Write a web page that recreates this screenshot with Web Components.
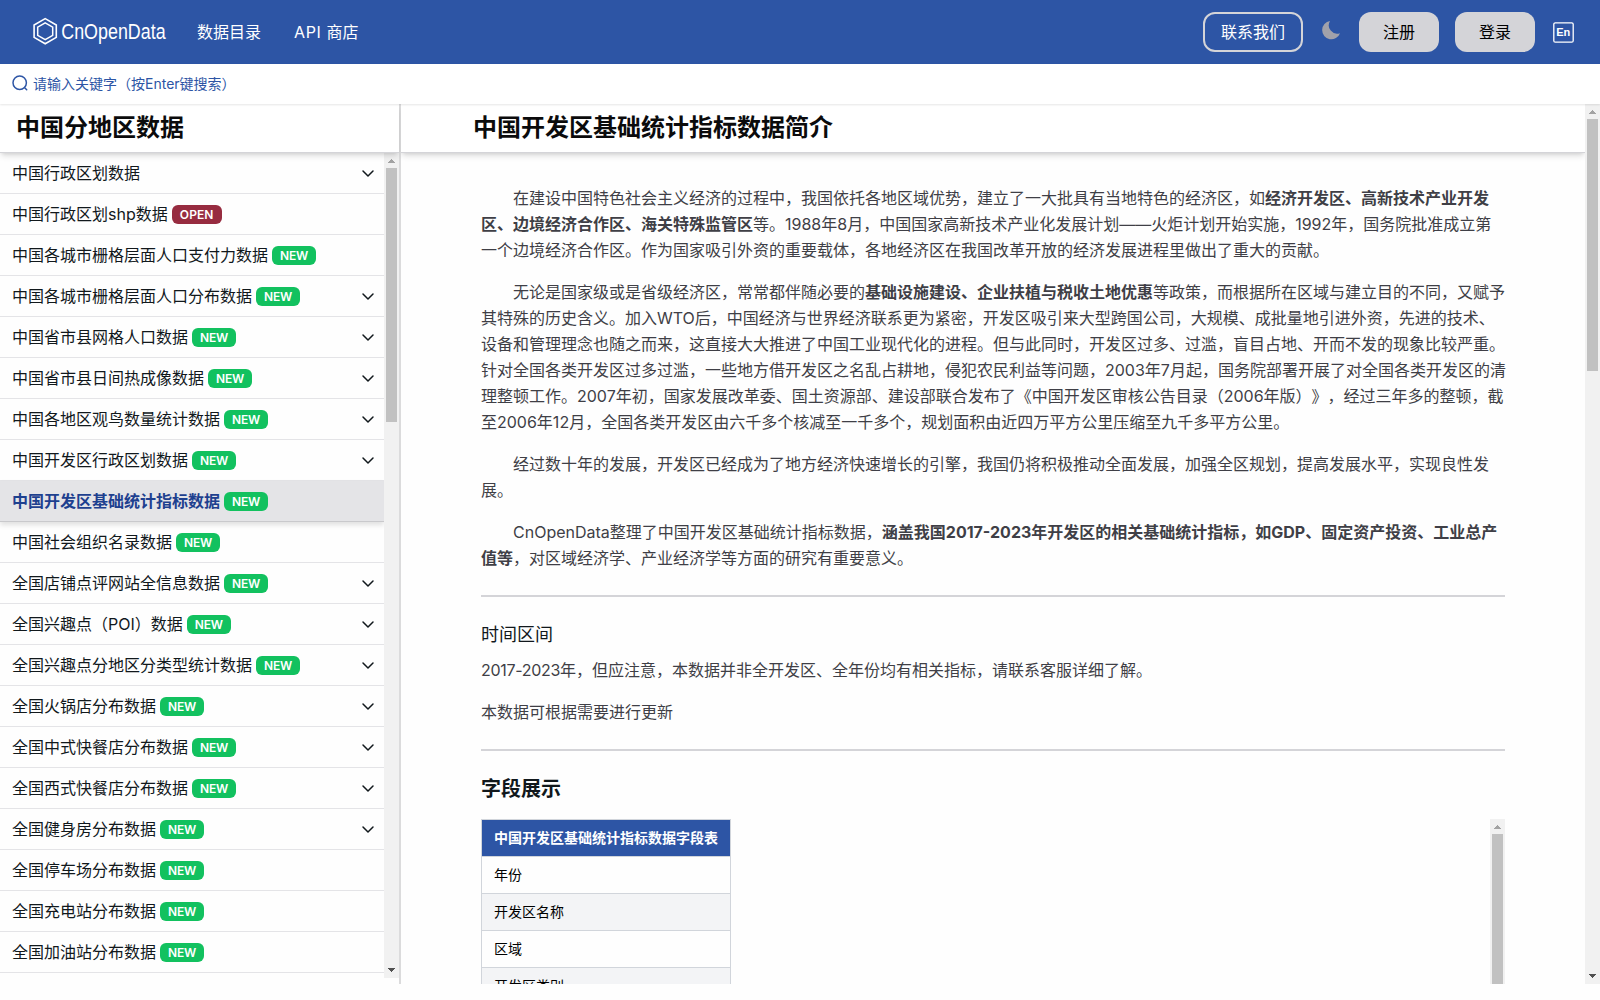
<!DOCTYPE html>
<html lang="zh-CN">
<head>
<meta charset="utf-8">
<title>中国开发区基础统计指标数据 - CnOpenData</title>
<style>
    body {
        margin: 0;
        height: 1000px;
        overflow: hidden;
        background: #fefefe;
        color: #11181c;
        font: 16px/24px Inter, "Noto Sans CJK SC", sans-serif;
        text-spacing-trim: space-all;
    }
</style>
</head>
<body>
<data-page></data-page>

<script>
class SiteHeader extends HTMLElement {
    constructor() {
        super();
        this.attachShadow({ mode: 'open' });
        this.shadowRoot.innerHTML = `
            <style>
                :host {
                    display: flex;
                    align-items: center;
                    justify-content: space-between;
                    box-sizing: border-box;
                    height: 64px;
                    padding: 0 26px 0 32px;
                    background: #2d55a5;
                    color: #fff;
                }
                nav, .actions { display: flex; align-items: center; }
                nav .link { margin-left: 27px; }
                nav .link + .link { margin-left: 33px; }
                .latin { letter-spacing: .6px; }
                svg { display: block; }
                button {
                    box-sizing: border-box;
                    height: 40px;
                    padding: 0;
                    border: 0;
                    border-radius: 12px;
                    background: #d4d4d8;
                    color: #000;
                    font: inherit;
                    width: 80px;
                }
                .contact {
                    width: 100px;
                    border: 2px solid #d4d4d8;
                    background: none;
                    color: #fff;
                }
                .moon { margin: 0 18px 4px; }
                .login { margin: 0 18px 0 16px; }
            </style>
            <nav>
                <svg width="138" height="36" viewBox="0 0 138 36" fill="none">
                    <path d="M13.2 4.6 24.3 11v12.400L13.2 29.800 2.1 23.400V11z" stroke="#fff" stroke-width="1.6"/>
                    <path d="M13.200 8.800 20.700 13.100v8.200L13.200 25.600 5.700 21.300V13.100z" stroke="#fff" stroke-width="1.5"/>
                    <text transform="scale(.795 1)" x="36.800" y="25.300" fill="#fff" font-family="Liberation Sans, Arial, sans-serif" font-size="22.500">CnOpenData</text>
                </svg>
                <span class="link">数据目录</span>
                <span class="link"><span class="latin">API </span>商店</span>
            </nav>
            <div class="actions">
                <button class="contact">联系我们</button>
                <svg class="moon" width="20" height="20" viewBox="0 0 20 20"><path d="M9 1A9.200 9.200 0 1 0 19 13.200 8.400 8.400 0 0 1 9 1z" fill="#a1a1aa"/></svg>
                <button>注册</button>
                <button class="login">登录</button>
                <svg width="21" height="22" viewBox="0 0 21 22">
                    <rect x=".8" y="1.800" width="19.400" height="19.400" rx="1.500" fill="none" stroke="#fff" stroke-width="1.300"/>
                    <text x="10.300" y="15.200" text-anchor="middle" fill="#fff" font-family="Liberation Sans, Arial, sans-serif" font-size="11" font-weight="700">En</text>
                </svg>
            </div>
        `;
    }
}
customElements.define('site-header', SiteHeader);

class SearchBar extends HTMLElement {
    constructor() {
        super();
        this.attachShadow({ mode: 'open' });
        this.shadowRoot.innerHTML = `
            <style>
                :host {
                    display: flex;
                    align-items: center;
                    box-sizing: border-box;
                    height: 40px;
                    padding: 0 12px;
                    gap: 4px;
                    background: #fff;
                    color: #2d55a5;
                    font-size: 14px;
                    line-height: 20px;
                    box-shadow: 0 1px 2px rgba(0, 0, 0, .1);
                    position: relative;
                    z-index: 3;
                }
                svg { margin-bottom: 1px; }
            </style>
            <svg width="17" height="17" viewBox="0 0 17 17" fill="none" stroke="#2d55a5" stroke-width="1.500" stroke-linecap="round">
                <circle cx="7.700" cy="7.700" r="6.700"/><path d="m12.700 12.700 2 2"/>
            </svg>
            <span>请输入关键字（按Enter键搜索）</span>
        `;
    }
}
customElements.define('search-bar', SearchBar);

// Fixed scrollbar: thumb height comes from the "thumb" attribute
class ScrollTrack extends HTMLElement {
    constructor() {
        super();
        this.attachShadow({ mode: 'open' });
    }

    connectedCallback() {
        this.shadowRoot.innerHTML = `
            <style>
                :host {
                    display: flex;
                    flex-direction: column;
                    align-items: center;
                    flex: none;
                    width: 15px;
                    overflow: hidden;
                    background: #f1f1f1;
                }
                svg { display: block; flex: none; }
                .thumb { width: 11px; height: ${this.getAttribute('thumb')}px; background: #c1c1c1; flex: none; }
                .space { flex: 1; }
            </style>
            <svg width="15" height="15" shape-rendering="crispEdges"><path d="M4 10h7L7.500 6z" fill="#a3a3a3"/></svg>
            <div class="thumb"></div>
            <div class="space"></div>
            ${this.hasAttribute('down') ? '<svg width="15" height="15" shape-rendering="crispEdges"><path d="M4 5h7L7.500 9z" fill="#505050"/></svg>' : ''}
        `;
    }
}
customElements.define('scroll-track', ScrollTrack);

class TitleBar extends HTMLElement {
    constructor() {
        super();
        this.attachShadow({ mode: 'open' });
        this.shadowRoot.innerHTML = `
            <style>
                :host {
                    display: block;
                    box-sizing: border-box;
                    height: 49px;
                    flex: none;
                    border-bottom: 1px solid #d4d4d8;
                    background: #fff;
                    color: #0b0b0c;
                    font-size: 24px;
                    font-weight: 600;
                    line-height: 47px;
                    box-shadow: 0 4px 6px -1px rgba(0, 0, 0, .12), 0 2px 4px -2px rgba(0, 0, 0, .12);
                    position: relative;
                    z-index: 2;
                }
            </style>
            <slot></slot>
        `;
    }
}
customElements.define('title-bar', TitleBar);

class CatalogItem extends HTMLElement {
    constructor() {
        super();
        this.attachShadow({ mode: 'open' });
    }

    connectedCallback() {
        const tag = this.getAttribute('tag');
        this.shadowRoot.innerHTML = `
            <style>
                :host {
                    display: flex;
                    align-items: center;
                    box-sizing: border-box;
                    height: 41px;
                    padding: 0 9px 0 12px;
                    border-bottom: 1px solid #e4e4e7;
                    white-space: nowrap;
                }
                :host([active]) {
                    background: #e4e4e7;
                    color: #1e408f;
                    font-weight: 700;
                    border-bottom-color: #c9c9cc;
                    box-shadow: 0 3px 5px rgba(0, 0, 0, .12);
                    position: relative;
                }
                .tag {
                    box-sizing: border-box;
                    width: 44px;
                    height: 19px;
                    margin: 1px 0 0 4px;
                    border-radius: 6px;
                    background: #12c15f;
                    color: #fff;
                    font-size: 12px;
                    font-weight: 600;
                    line-height: 19px;
                    letter-spacing: -.2px;
                    text-align: center;
                }
                .OPEN { width: 50px; background: #972c40; letter-spacing: .1px; }
                svg { margin: 1px 0 0 auto; }
            </style>
            <slot></slot>
            ${tag ? `<span class="tag ${tag}">${tag}</span>` : ''}
            ${this.hasAttribute('more') ? '<svg width="14" height="10" viewBox="0 0 14 10" fill="none" stroke="#11181c" stroke-width="1.500" stroke-linecap="round" stroke-linejoin="round"><path d="m2 2 5 5 5-5"/></svg>' : ''}
        `;
    }
}
customElements.define('catalog-item', CatalogItem);

const ITEMS = [
    ['中国行政区划数据', '', 1],
    ['中国行政区划shp数据', 'OPEN', 0],
    ['中国各城市栅格层面人口支付力数据', 'NEW', 0],
    ['中国各城市栅格层面人口分布数据', 'NEW', 1],
    ['中国省市县网格人口数据', 'NEW', 1],
    ['中国省市县日间热成像数据', 'NEW', 1],
    ['中国各地区观鸟数量统计数据', 'NEW', 1],
    ['中国开发区行政区划数据', 'NEW', 1],
    ['中国开发区基础统计指标数据', 'NEW', 0, 1],
    ['中国社会组织名录数据', 'NEW', 0],
    ['全国店铺点评网站全信息数据', 'NEW', 1],
    ['全国兴趣点（POI）数据', 'NEW', 1],
    ['全国兴趣点分地区分类型统计数据', 'NEW', 1],
    ['全国火锅店分布数据', 'NEW', 1],
    ['全国中式快餐店分布数据', 'NEW', 1],
    ['全国西式快餐店分布数据', 'NEW', 1],
    ['全国健身房分布数据', 'NEW', 1],
    ['全国停车场分布数据', 'NEW', 0],
    ['全国充电站分布数据', 'NEW', 0],
    ['全国加油站分布数据', 'NEW', 0],
];

class CatalogSidebar extends HTMLElement {
    constructor() {
        super();
        this.attachShadow({ mode: 'open' });
        const rows = ITEMS.map(([name, tag, more, active]) =>
            `<catalog-item ${tag ? `tag="${tag}"` : ''} ${more ? 'more' : ''} ${active ? 'active' : ''}>${name}</catalog-item>`
        ).join('');
        this.shadowRoot.innerHTML = `
            <style>
                :host {
                    display: flex;
                    flex-direction: column;
                    flex: none;
                    width: 399px;
                    border-right: 2px solid #dbdbdc;
                }
                title-bar { padding-left: 16px; }
                .body { display: flex; height: 825px; }
                .list { flex: 1; min-width: 0; overflow: hidden; }
            </style>
            <title-bar>中国分地区数据</title-bar>
            <div class="body">
                <div class="list">${rows}</div>
                <scroll-track thumb="254" down></scroll-track>
            </div>
        `;
    }
}
customElements.define('catalog-sidebar', CatalogSidebar);

class FieldTable extends HTMLElement {
    constructor() {
        super();
        this.attachShadow({ mode: 'open' });
        this.shadowRoot.innerHTML = `
            <style>
                :host {
                    display: flex;
                    justify-content: space-between;
                    align-items: flex-start;
                    height: 165px;
                    overflow: hidden;
                    color: #000;
                    font-size: 14px;
                    line-height: 20px;
                }
                table { border-collapse: collapse; width: 250px; }
                th, td {
                    box-sizing: border-box;
                    height: 37px;
                    padding: 0 12px 1px;
                    border: 1px solid #d1d5db;
                    text-align: left;
                    white-space: nowrap;
                }
                th { background: #2d55a5; color: #fff; font-weight: 700; }
                tr:nth-child(odd) td { background: #f3f4f6; }
                scroll-track { height: 165px; }
            </style>
            <table>
                <tr><th>中国开发区基础统计指标数据字段表</th></tr>
                <tr><td>年份</td></tr>
                <tr><td>开发区名称</td></tr>
                <tr><td>区域</td></tr>
                <tr><td>开发区类别</td></tr>
            </table>
            <scroll-track thumb="200"></scroll-track>
        `;
    }
}
customElements.define('field-table', FieldTable);

class DataArticle extends HTMLElement {
    constructor() {
        super();
        this.attachShadow({ mode: 'open' });
        this.shadowRoot.innerHTML = `
            <style>
                :host { display: flex; flex: 1; min-width: 0; }
                .main { flex: 1; min-width: 0; overflow: hidden; }
                title-bar { padding-left: 72px; }
                .content { width: 1024px; padding: 32px 80px 0; }
                p { margin: 0 -1px 16px 0; color: #3f3f46; line-height: 26px; }
                .intro p { text-indent: 32px; }
                .years { letter-spacing: -.3px; }
                b { font-weight: 700; }
                hr { height: 2px; margin: 24px 0 0; border: 0; background: #d4d4d8; }
                h3 { margin: 25px 0 9px; font-size: 18px; font-weight: 400; line-height: 26px; }
                h2 { margin: 24px 0 16px; font-size: 20px; font-weight: 600; line-height: 28px; }
            </style>
            <div class="main">
                <title-bar>中国开发区基础统计指标数据简介</title-bar>
                <div class="content">
                    <div class="intro">
                        <p>在建设中国特色社会主义经济的过程中，我国依托各地区域优势，建立了一大批具有当地特色的经济区，如<b>经济开发区、高新技术产业开发区、边境经济合作区、海关特殊监管区</b>等。1988年8月，中国国家高新技术产业化发展计划——火炬计划开始实施，1992年，国务院批准成立第一个边境经济合作区。作为国家吸引外资的重要载体，各地经济区在我国改革开放的经济发展进程里做出了重大的贡献。</p>
                        <p>无论是国家级或是省级经济区，常常都伴随必要的<b>基础设施建设、企业扶植与税收土地优惠</b>等政策，而根据所在区域与建立目的不同，又赋予其特殊的历史含义。加入WTO后，中国经济与世界经济联系更为紧密，开发区吸引来大型跨国公司，大规模、成批量地引进外资，先进的技术、设备和管理理念也随之而来，这直接大大推进了中国工业现代化的进程。但与此同时，开发区过多、过滥，盲目占地、开而不发的现象比较严重。针对全国各类开发区过多过滥，一些地方借开发区之名乱占耕地，侵犯农民利益等问题，2003年7月起，国务院部署开展了对全国各类开发区的清理整顿工作。2007年初，国家发展改革委、国土资源部、建设部联合发布了《中国开发区审核公告目录（2006年版）》，经过三年多的整顿，截至2006年12月，全国各类开发区由六千多个核减至一千多个，规划面积由近四万平方公里压缩至九千多平方公里。</p>
                        <p>经过数十年的发展，开发区已经成为了地方经济快速增长的引擎，我国仍将积极推动全面发展，加强全区规划，提高发展水平，实现良性发展。</p>
                        <p>CnOpenData整理了中国开发区基础统计指标数据，<b>涵盖我国2017-2023年开发区的相关基础统计指标，如GDP、固定资产投资、工业总产值等</b>，对区域经济学、产业经济学等方面的研究有重要意义。</p>
                    </div>
                    <hr>
                    <h3>时间区间</h3>
                    <p><span class="years">2017-2023</span>年，但应注意，本数据并非全开发区、全年份均有相关指标，请联系客服详细了解。</p>
                    <p>本数据可根据需要进行更新</p>
                    <hr>
                    <h2>字段展示</h2>
                    <field-table></field-table>
                </div>
            </div>
            <scroll-track thumb="252" down></scroll-track>
        `;
    }
}
customElements.define('data-article', DataArticle);

class DataPage extends HTMLElement {
    constructor() {
        super();
        this.attachShadow({ mode: 'open' });
        this.shadowRoot.innerHTML = `
            <style>
                :host { display: flex; flex-direction: column; height: 984px; }
                .columns { display: flex; height: 880px; }
            </style>
            <site-header></site-header>
            <search-bar></search-bar>
            <div class="columns">
                <catalog-sidebar></catalog-sidebar>
                <data-article></data-article>
            </div>
        `;
    }
}
customElements.define('data-page', DataPage);
</script>
</body>
</html>
